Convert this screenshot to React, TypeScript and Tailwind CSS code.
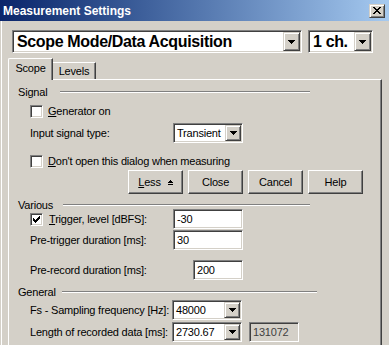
import React from 'react'

const sunken = 'border border-t-[#808080] border-l-[#808080] border-b-white border-r-white shadow-[inset_1px_1px_0_#404040,inset_-1px_-1px_0_#d4d0c8]'
const raised = 'border border-t-white border-l-white border-b-[#404040] border-r-[#404040] shadow-[inset_-1px_-1px_0_#808080]'
const bevel = 'border border-t-[#d4d0c8] border-l-[#d4d0c8] border-b-[#404040] border-r-[#404040] shadow-[inset_1px_1px_0_#ffffff,inset_-1px_-1px_0_#808080]'

function DownArrow() {
  return (
    <svg width="7" height="4" viewBox="0 0 7 4" shapeRendering="crispEdges">
      <path d="M0 0h7v1h-1v1h-1v1h-1v1h-1v-1h-1v-1h-1v-1h-1z" fill="#000" />
    </svg>
  )
}

function Combo({ value, box, big }: { value: string; box: string; big?: boolean }) {
  return (
    <div className={`${sunken} ${box} p-[1px] flex bg-white`}>
      <span className={`flex-1 flex items-center overflow-hidden whitespace-nowrap ${big ? 'pl-[3px] text-[16px] font-bold tracking-[-0.35px]' : 'pl-[2px]'}`}>
        {value}
      </span>
      <div className={`${bevel} ${big ? 'w-[17px]' : 'w-[16px]'} h-full bg-[#d4d0c8] flex items-center justify-center`}>
        <DownArrow />
      </div>
    </div>
  )
}

function Edit({ value, box, readOnly }: { value: string; box: string; readOnly?: boolean }) {
  return (
    <div className={`${sunken} ${box} p-[1px] flex items-center ${readOnly ? 'bg-[#d4d0c8] text-[#404040]' : 'bg-white'}`}>
      <span className="pl-[2px]">{value}</span>
    </div>
  )
}

function Check({ checked }: { checked?: boolean }) {
  return (
    <div className={`${sunken} w-[13px] h-[13px] bg-white flex items-center justify-center shrink-0`}>
      {checked && (
        <svg width="7" height="7" viewBox="0 0 7 7" shapeRendering="crispEdges">
          <path d="M6 0h1v3h-1v1h-1v1h-1v1h-1v1h-1v-1h-1v-1h-1v-3h1v1h1v1h1v-1h1v-1h1z" fill="#000" />
        </svg>
      )}
    </div>
  )
}

function Group({ label, labelW, lineW }: { label: string; labelW: string; lineW: string }) {
  return (
    <div className="flex items-center h-[12px] pl-[9px]">
      <span className={labelW}>{label}</span>
      <div className={`${lineW} h-[2px] border-t border-t-[#808080] border-b border-b-white`} />
    </div>
  )
}

function Btn({ children }: { children: React.ReactNode }) {
  return (
    <div className={`${raised} w-[55px] h-full flex items-center justify-center bg-[#d4d0c8]`}>
      {children}
    </div>
  )
}

export default function App() {
  return (
    <div className="w-[389px] h-[345px] overflow-hidden bg-[#d4d0c8] text-black text-[11px] tracking-[-0.2px] font-['Liberation_Sans',Arial,sans-serif] leading-none">
      {/* title bar */}
      <div className="h-[21px] flex items-center justify-between pl-[3px] pr-[4px] bg-gradient-to-r from-[#0a246a] to-[#a6caf0]">
        <span className="text-white font-bold text-[12px] tracking-normal">Measurement Settings</span>
        <div className={`${bevel} w-[16px] h-[14px] bg-[#d4d0c8] flex items-center justify-center`}>
          <svg width="8" height="7" viewBox="0 0 8 7" shapeRendering="crispEdges">
            <path d="M0 0h2v1h1v1h2v-1h1v-1h2v1h-1v1h-1v1h-1v1h1v1h1v1h1v1h-2v-1h-1v-1h-2v1h-1v1h-2v-1h1v-1h1v-1h1v-1h-1v-1h-1v-1h-1z" fill="#000" />
          </svg>
        </div>
      </div>

      <div className="h-[324px] shadow-[inset_1px_0_0_#d4d0c8,inset_2px_0_0_#ffffff]">
        {/* mode selection */}
        <div className="flex pt-[9px] pl-[12px] gap-[6px]">
          <Combo big value="Scope Mode/Data Acquisition" box="w-[290px] h-[23px]" />
          <Combo big value="1 ch." box="w-[65px] h-[23px]" />
        </div>

        {/* tabs */}
        <div className="flex items-end h-[21px] mt-[5px] ml-[8px]">
          <div className="relative z-10 -mb-[1px] w-[45px] h-[22px] bg-[#d4d0c8] border-l border-l-white border-t border-t-white border-r border-r-[#404040] rounded-tl-[2px] shadow-[inset_-1px_0_0_#808080] flex items-center justify-center pb-[2px]">
            Scope
          </div>
          <div className="w-[43px] h-[17px] border-t border-t-white border-r border-r-[#404040] shadow-[inset_-1px_0_0_#808080] flex items-center justify-center">
            Levels
          </div>
        </div>

        {/* panel */}
        <div className="ml-[8px] w-[374px] h-[270px] border-l border-l-white border-t border-t-white border-r border-r-[#404040] shadow-[inset_-1px_0_0_#808080]">
          <div className="mt-[6px]">
            <Group label="Signal" labelW="w-[42px]" lineW="w-[250px]" />
          </div>
          <div className="mt-[7px] h-[13px] pl-[21px] flex items-center gap-[5px]">
            <Check />
            <span><span className="underline">G</span>enerator on</span>
          </div>
          <div className="mt-[5px] h-[20px] pl-[21px] flex items-center">
            <span className="w-[143px]">Input signal type:</span>
            <Combo value="Transient" box="w-[70px] h-[20px]" />
          </div>
          <div className="mt-[12px] h-[13px] pl-[21px] flex items-center gap-[5px]">
            <Check />
            <span><span className="underline">D</span>on't open this dialog when measuring</span>
          </div>
          <div className="mt-[2px] h-[24px] ml-[119px] flex gap-[5px]">
            <Btn>
              <span className="flex items-center gap-[7px]">
                <span><span className="underline">L</span>ess</span>
                <svg width="5" height="5" viewBox="0 0 5 5" shapeRendering="crispEdges">
                  <path d="M2 0h1v1h1v1h1v1h-5v-1h1v-1h1zM0 4h5v1h-5z" fill="#000" />
                </svg>
              </span>
            </Btn>
            <Btn>Close</Btn>
            <Btn>Cancel</Btn>
            <Btn>Help</Btn>
          </div>

          <div className="mt-[5px]">
            <Group label="Various" labelW="w-[45px]" lineW="w-[247px]" />
          </div>
          <div className="-mt-[2px] h-[20px] pl-[21px] flex items-center">
            <div className="w-[143px] flex items-center gap-[6px]">
              <Check checked />
              <span><span className="underline">T</span>rigger, level [dBFS]:</span>
            </div>
            <Edit value="-30" box="w-[70px] h-[20px]" />
          </div>
          <div className="mt-[1px] h-[20px] pl-[21px] flex items-center">
            <span className="w-[143px]">Pre-trigger duration [ms]:</span>
            <Edit value="30" box="w-[70px] h-[20px]" />
          </div>
          <div className="mt-[10px] h-[20px] pl-[21px] flex items-center">
            <span className="w-[163px]">Pre-record duration [ms]:</span>
            <Edit value="200" box="w-[50px] h-[20px]" />
          </div>

          <div className="mt-[6px]">
            <Group label="General" labelW="w-[44px]" lineW="w-[255px]" />
          </div>
          <div className="mt-[2px] h-[20px] pl-[21px] flex items-center">
            <span className="w-[142px]">Fs - Sampling frequency [Hz]:</span>
            <Combo value="48000" box="w-[70px] h-[20px]" />
          </div>
          <div className="mt-[2px] h-[20px] pl-[21px] flex items-center">
            <span className="w-[142px]">Length of recorded data [ms]:</span>
            <Combo value="2730.67" box="w-[70px] h-[20px]" />
            <div className="ml-[7px]">
              <Edit readOnly value="131072" box="w-[50px] h-[20px]" />
            </div>
          </div>
        </div>
      </div>
    </div>
  )
}
